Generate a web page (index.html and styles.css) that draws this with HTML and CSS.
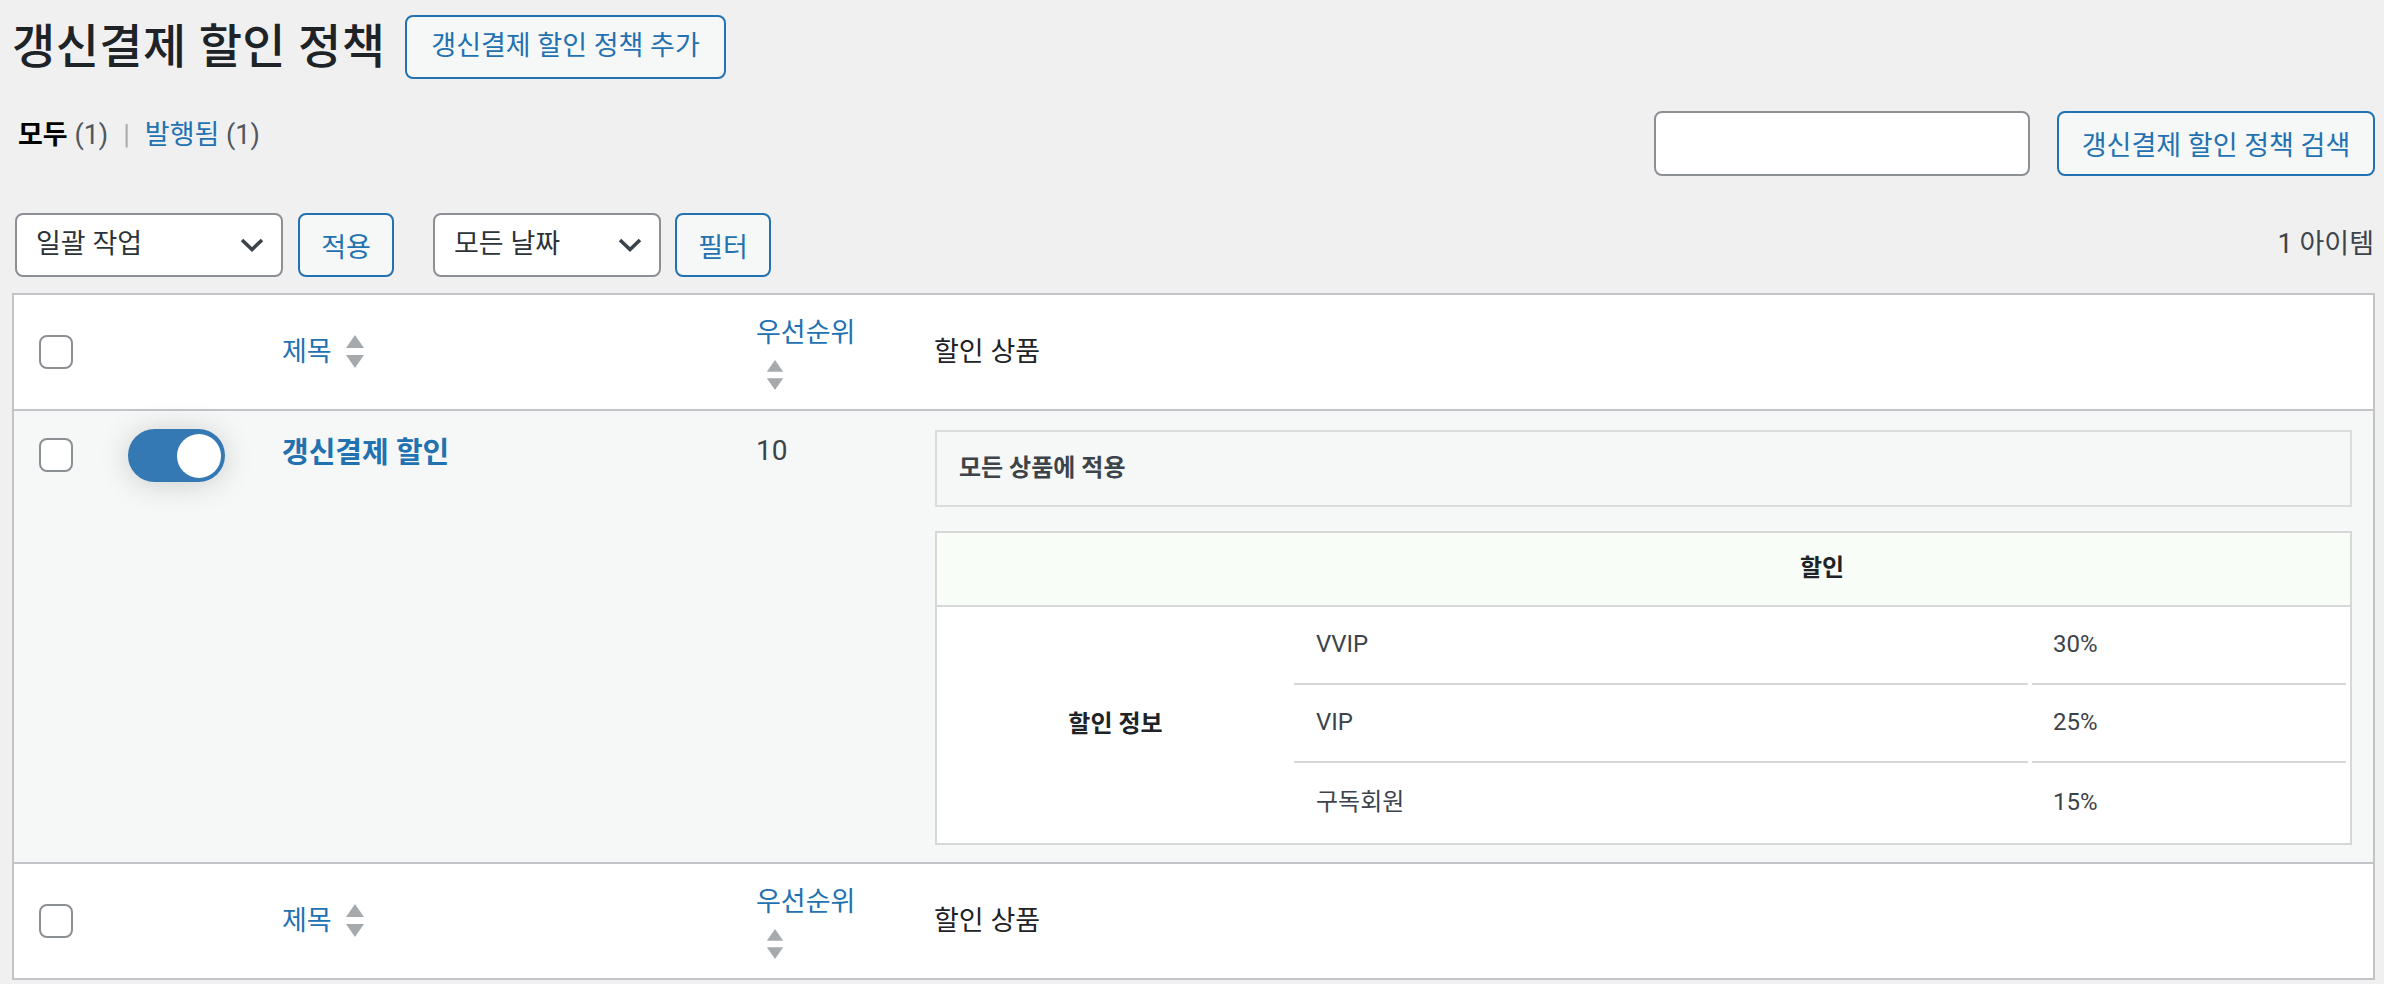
FILE: index.html
```html
<!DOCTYPE html>
<html lang="ko">
<head>
<meta charset="utf-8">
<title>갱신결제 할인 정책</title>
<link rel="stylesheet" href="styles.css">
</head>
<body>
<div class="wrap">
  <div class="heading">
    <h1>갱신결제 할인 정책</h1>
    <a class="btn" href="#">갱신결제 할인 정책 추가</a>
  </div>

  <div class="subbar">
    <ul class="views">
      <li class="current">모두 <span class="count">(1)</span></li>
      <li class="sep">|</li>
      <li><a href="#">발행됨</a> <span class="count">(1)</span></li>
    </ul>
    <div class="search">
      <input class="search-input" type="search" aria-label="검색">
      <button class="btn" type="button">갱신결제 할인 정책 검색</button>
    </div>
  </div>

  <div class="tablenav">
    <div class="actions">
      <div class="select bulk"><span>일괄 작업</span><svg class="chev" viewBox="0 0 24 14" width="24" height="14"><polyline points="2,2 12,11.5 22,2" fill="none" stroke="#3c434a" stroke-width="3.6"/></svg></div>
      <button class="btn small" type="button">적용</button>
      <div class="select date"><span>모든 날짜</span><svg class="chev" viewBox="0 0 24 14" width="24" height="14"><polyline points="2,2 12,11.5 22,2" fill="none" stroke="#3c434a" stroke-width="3.6"/></svg></div>
      <button class="btn small" type="button">필터</button>
    </div>
    <div class="num">1 아이템</div>
  </div>

  <table class="list">
    <colgroup>
      <col class="c-cb"><col class="c-toggle"><col class="c-title"><col class="c-prio"><col>
    </colgroup>
    <thead>
      <tr>
        <th class="cb"><input type="checkbox" aria-label="전체 선택"></th>
        <th></th>
        <th><a class="sort" href="#">제목 <svg class="arrows" viewBox="0 0 18 34" width="18" height="34"><polygon points="9,0 18,13 0,13" fill="#a7aaad"/><polygon points="0,20 18,20 9,33" fill="#a7aaad"/></svg></a></th>
        <th><a class="sort stack" href="#"><span>우선순위</span><svg class="arrows" viewBox="0 0 18 34" width="18" height="31"><polygon points="9,0 18,13 0,13" fill="#a7aaad"/><polygon points="0,20 18,20 9,33" fill="#a7aaad"/></svg></a></th>
        <th class="plain">할인 상품</th>
      </tr>
    </thead>
    <tbody>
      <tr>
        <td class="cb"><input type="checkbox" aria-label="선택"></td>
        <td class="t-toggle"><span class="toggle"><span class="knob"></span></span></td>
        <td class="t-title"><a href="#">갱신결제 할인</a></td>
        <td class="t-prio">10</td>
        <td class="t-products">
          <div class="applies">모든 상품에 적용</div>
          <div class="dtable">
            <div class="dhead"><div class="dhead-blank"></div><div class="dhead-title">할인</div></div>
            <div class="dbody">
              <div class="dlabel">할인 정보</div>
              <div class="drows">
                <div class="drow"><div class="dcell">VVIP</div><div class="dcell val">30%</div></div>
                <div class="drow"><div class="dcell">VIP</div><div class="dcell val">25%</div></div>
                <div class="drow last"><div class="dcell">구독회원</div><div class="dcell val">15%</div></div>
              </div>
            </div>
          </div>
        </td>
      </tr>
    </tbody>
    <tfoot>
      <tr>
        <th class="cb"><input type="checkbox" aria-label="전체 선택"></th>
        <th></th>
        <th><a class="sort" href="#">제목 <svg class="arrows" viewBox="0 0 18 34" width="18" height="34"><polygon points="9,0 18,13 0,13" fill="#a7aaad"/><polygon points="0,20 18,20 9,33" fill="#a7aaad"/></svg></a></th>
        <th><a class="sort stack" href="#"><span>우선순위</span><svg class="arrows" viewBox="0 0 18 34" width="18" height="31"><polygon points="9,0 18,13 0,13" fill="#a7aaad"/><polygon points="0,20 18,20 9,33" fill="#a7aaad"/></svg></a></th>
        <th class="plain">할인 상품</th>
      </tr>
    </tfoot>
  </table>
</div>
</body>
</html>
```

FILE: styles.css
```css
* { box-sizing: border-box; }

html, body {
  margin: 0;
  padding: 0;
}

body {
  background: #f0f0f1;
  color: #3c434a;
  font-family: Roboto, "Noto Sans CJK KR", sans-serif;
  font-size: 27px;
  line-height: 1.4;
}

a { color: #2271b1; text-decoration: none; }

.wrap {
  padding: 15px 9px 0 12px;
}

/* heading */
.heading {
  display: flex;
  align-items: center;
  gap: 20px;
  height: 64px;
}

h1 {
  margin: 0;
  font-size: 47px;
  font-weight: 500;
  line-height: 64px;
  color: #1d2327;
  letter-spacing: 0.4px;
}

.btn {
  display: inline-flex;
  align-items: center;
  justify-content: center;
  height: 64px;
  padding: 0 24px;
  border: 2px solid #2271b1;
  border-radius: 8px;
  background: #f6f7f7;
  color: #2271b1;
  font-family: inherit;
  font-size: 27px;
  white-space: nowrap;
  cursor: pointer;
}

.btn.small {
  width: 96px;
  padding: 0;
}

/* sub bar */
.subbar {
  display: flex;
  justify-content: space-between;
  align-items: flex-start;
  margin-top: 32px;
}

.views {
  list-style: none;
  margin: 0;
  padding: 6px 0 0 6px;
  display: flex;
  gap: 15px;
  font-size: 27px;
  line-height: 36px;
  color: #50575e;
}

.views .current { color: #000; font-weight: 700; }
.views .current .count { font-weight: 400; color: #50575e; }
.views .sep { color: #a7aaad; }

.search {
  display: flex;
  gap: 27px;
}

.search-input {
  width: 376px;
  height: 65px;
  border: 2px solid #8c8f94;
  border-radius: 8px;
  background: #fff;
  margin: 0;
}

.search .btn {
  width: 318px;
  height: 65px;
  padding: 0;
}

/* tablenav */
.tablenav {
  display: flex;
  justify-content: space-between;
  align-items: center;
  height: 64px;
  margin-top: 37px;
}

.actions {
  display: flex;
  align-items: center;
  margin-left: 3px;
}

.select {
  display: flex;
  align-items: center;
  justify-content: space-between;
  height: 64px;
  padding: 0 17px 0 19px;
  border: 2px solid #8c8f94;
  border-radius: 8px;
  background: #fff;
  color: #2c3338;
  font-size: 27px;
}

.select.bulk { width: 268px; margin-right: 15px; }
.select.date { width: 228px; margin-left: 39px; margin-right: 14px; }

.num {
  color: #3c434a;
  font-size: 27px;
  padding-right: 1px;
}

/* list table */
.list {
  width: 100%;
  margin-top: 16px;
  border: 2px solid #c3c4c7;
  border-spacing: 0;
  table-layout: fixed;
  background: #fff;
}

.c-cb { width: 94px; }
.c-toggle { width: 154px; }
.c-title { width: 474px; }
.c-prio { width: 178px; }

.list thead th,
.list tfoot th {
  height: 116px;
  padding: 0 20px;
  text-align: left;
  vertical-align: middle;
  font-weight: 400;
  font-size: 27px;
  line-height: 38px;
}

.list thead th { border-bottom: 2px solid #c3c4c7; }
.list tfoot th { border-top: 2px solid #c3c4c7; }

.list th.cb, .list td.cb {
  padding-left: 25px;
  padding-right: 0;
}

input[type="checkbox"] {
  appearance: none;
  -webkit-appearance: none;
  display: block;
  width: 34px;
  height: 34px;
  margin: 0;
  border: 2px solid #8c8f94;
  border-radius: 8px;
  background: #fff;
}

.sort {
  display: inline-flex;
  align-items: center;
  gap: 14px;
  color: #2271b1;
}

.sort.stack {
  flex-direction: column;
  align-items: flex-start;
  gap: 8px;
}

.sort.stack .arrows { margin-left: 10px; }

.list th.plain { color: #1d2327; }

.list tbody td {
  background: #f6f7f7;
  vertical-align: top;
  padding: 20px;
}

.list td.cb { padding-top: 27px; }

.t-toggle { padding-top: 18px !important; }

.toggle {
  display: flex;
  justify-content: flex-end;
  align-items: center;
  width: 97px;
  height: 53px;
  padding: 0 4px;
  border-radius: 27px;
  background: #3579b4;
  box-shadow: 0 2px 30px rgba(0, 0, 0, 0.17);
}

.knob {
  width: 44px;
  height: 44px;
  border-radius: 50%;
  background: #fff;
}

.t-title {
  padding-top: 22px !important;
  font-size: 29px;
  font-weight: 700;
  line-height: 40px;
}

.t-prio {
  padding-top: 21px !important;
  color: #3c434a;
  font-size: 28px;
  line-height: 38px;
}

.list td.t-products {
  padding: 19px 21px 17px 21px;
}

.applies {
  display: flex;
  align-items: center;
  height: 77px;
  padding-left: 22px;
  border: 2px solid #dcdcde;
  background: #f6f7f7;
  color: #3c434a;
  font-size: 24px;
  font-weight: 700;
}

.dtable {
  margin-top: 24px;
  border: 2px solid #d6d7d8;
  background: #fff;
  color: #3c434a;
  font-size: 24px;
}

.dhead {
  display: flex;
  height: 74px;
  background: #f8fdf7;
  border-bottom: 2px solid #d6d7d8;
}

.dhead-blank { width: 357px; }

.dhead-title {
  flex: 1;
  display: flex;
  align-items: center;
  justify-content: center;
  font-weight: 700;
  color: #1d2327;
}

.dbody { display: flex; }

.dlabel {
  width: 357px;
  display: flex;
  align-items: center;
  justify-content: center;
  font-weight: 700;
  color: #1d2327;
}

.drows {
  flex: 1;
  padding-right: 4px;
}

.drow {
  display: grid;
  grid-template-columns: 734px 1fr;
  column-gap: 4px;
}

.dcell {
  display: flex;
  align-items: center;
  height: 78px;
  padding-left: 22px;
  border-bottom: 2px solid #d6d7d8;
}

.dcell.val { padding-left: 21px; }

.drow.last .dcell {
  height: 80px;
  border-bottom: 0;
}
```
